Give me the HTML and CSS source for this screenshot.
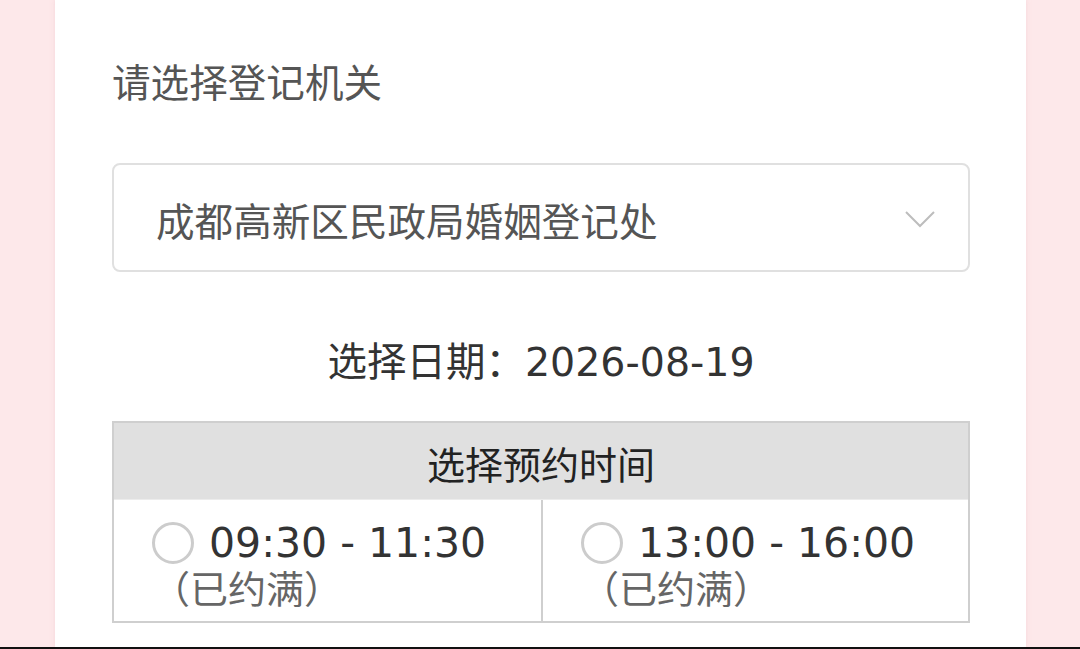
FILE: index.html
```html
<!DOCTYPE html>
<html>
<head>
<meta charset="utf-8">
<link rel="stylesheet" href="styles.css">
</head>
<body>

<div class="page">
    <div class="card">
        <div class="label">请选择登记机关</div>

        <div class="select">
            <span class="select-text">成都高新区民政局婚姻登记处</span>
            <svg class="chevron" width="30" height="18" viewBox="0 0 30 18">
                <path d="M1 2 L15 16 L29 2" fill="none" stroke="#bdbdbd" stroke-width="2"/>
            </svg>
        </div>

        <div class="date">选择日期：2026-08-19</div>

        <div class="slots">
            <div class="slots-head">选择预约时间</div>
            <div class="slots-body">
                <div class="slot">
                    <div class="slot-line"><span class="radio"></span>09:30 - 11:30</div>
                    <div class="slot-note">（已约满）</div>
                </div>
                <div class="slot">
                    <div class="slot-line"><span class="radio"></span>13:00 - 16:00</div>
                    <div class="slot-note">（已约满）</div>
                </div>
            </div>
        </div>
    </div>
</div>
<div class="bottom-bar"></div>

</body>
</html>
```

FILE: styles.css
```css
body {
    margin: 0;
    background: #fde8ea;
    font-family: "DejaVu Sans", "Noto Sans CJK SC", sans-serif;
    overflow: hidden;
}

.page {
    padding: 0 54px 0 55px;
}

.card {
    background: #ffffff;
    height: 647px;
    box-sizing: border-box;
    padding: 61px 56px 0 57px;
    box-shadow: 0 0 4px rgba(240, 200, 205, 0.6);
}

.label {
    font-family: "Noto Sans CJK SC", sans-serif;
    font-size: 38.6px;
    line-height: 38px;
    color: #555555;
}

.select {
    margin-top: 64px;
    height: 109px;
    box-sizing: border-box;
    border: 2px solid #e0e0e0;
    border-radius: 8px;
    display: flex;
    align-items: center;
    justify-content: space-between;
    padding: 2px 33px 0 42px;
}

.select-text {
    font-family: "Noto Sans CJK SC", sans-serif;
    font-size: 38.6px;
    color: #555555;
}

.chevron {
    display: block;
    margin-top: 0;
}

.date {
    margin-top: 70px;
    text-align: center;
    font-size: 39.5px;
    line-height: 40px;
    color: #333333;
}

.slots {
    margin-top: 39px;
    border: 2px solid #cfcfcf;
}

.slots-head {
    background: #e0e0e0;
    height: 76px;
    line-height: 80px;
    text-align: center;
    font-family: "Noto Sans CJK SC", sans-serif;
    font-size: 38px;
    color: #222222;
}

.slots-body {
    display: grid;
    grid-template-columns: 1fr 1fr;
    border-top: 1px solid #ececec;
}

.slot {
    padding: 21px 0 12px 38px;
}

.slot + .slot {
    border-left: 2px solid #cfcfcf;
}

.slot-line {
    display: flex;
    align-items: center;
    height: 44px;
    font-size: 41px;
    color: #333333;
}

.radio {
    width: 36px;
    height: 36px;
    border: 3px solid #cccccc;
    border-radius: 50%;
    margin-right: 15px;
    flex: none;
}

.slot-note {
    font-family: "Noto Sans CJK SC", sans-serif;
    font-size: 38px;
    line-height: 44px;
    color: #666666;
}

.bottom-bar {
    height: 2px;
    background: #111111;
}
```
